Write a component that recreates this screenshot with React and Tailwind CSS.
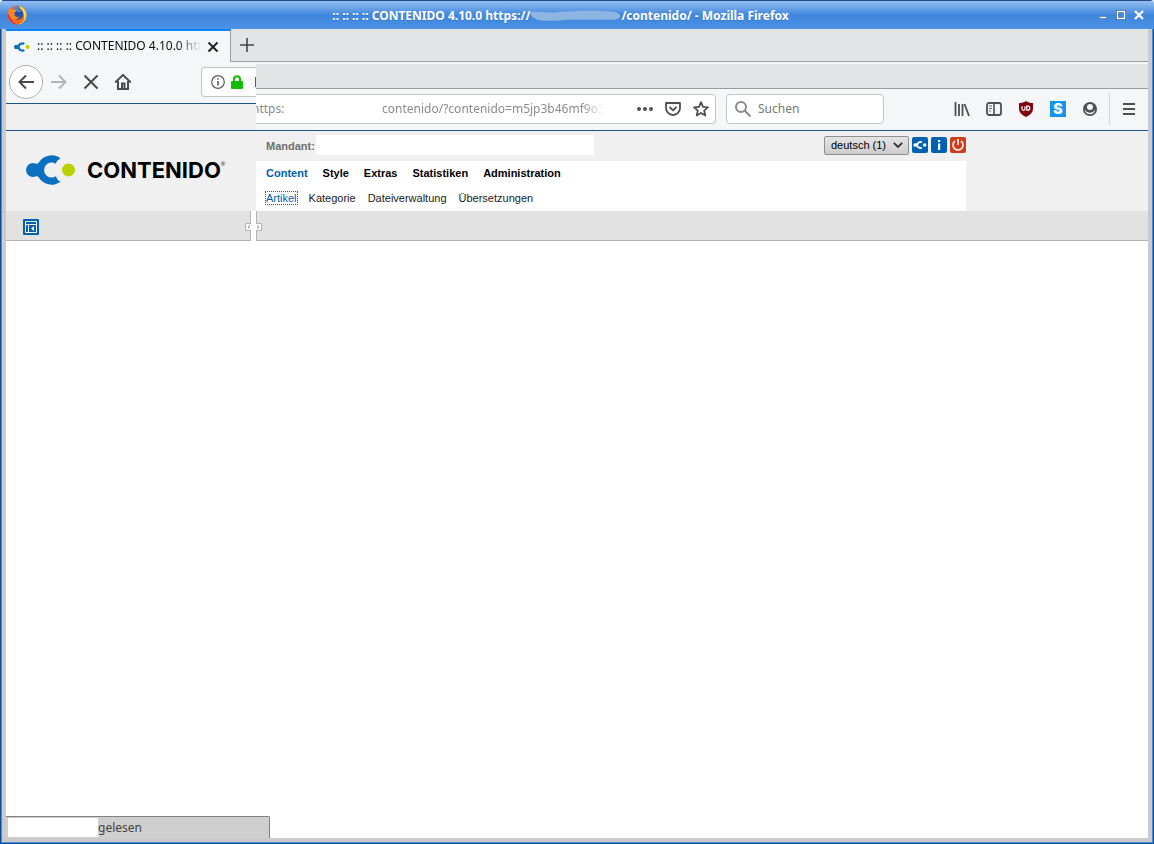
import { useState } from 'react';

const MAIN_NAV = ['Content', 'Style', 'Extras', 'Statistiken', 'Administration'];
const SUB_NAV = ['Artikel', 'Kategorie', 'Dateiverwaltung', 'Übersetzungen'];

const FirefoxLogo = () => (
  <svg viewBox="0 0 20 20" className="size-5 shrink-0">
    <circle cx="10" cy="10" r="9.5" fill="#f7681f" />
    <path d="M12 .8c4 1.500 7.500 4.500 7.500 9.500a9.500 9.500 0 0 1-9 9.200c5-1 7-4.500 6.500-8.500-.4-3.500-3-5-3.500-7z" fill="#ffd93a" />
    <path d="M.8 8C.3 13 4 19.500 10.500 19.500 6 18 3.500 15 3.800 11z" fill="#e8244f" />
    <circle cx="10.500" cy="9" r="5.800" fill="#2b4fa8" />
    <path d="M6 3c2-1.800 5-2.200 7-1.200-1.500.4-2 1.400-2 2.400 2 .2 3.500 1.500 4 3-1.500-.6-3-.6-4 0z" fill="#3f8fe0" />
    <path d="M2 3.500c1 .8 2 1 3.500 1 1.500-.6 3-.2 4 1 0 1.500-2 1.700-2.500 2.500 1 .8 1 2 .2 2.600 1.300 1.400 3.600 1.700 5.600.7-1.300 3-5.300 4-8.300 2.200C1.500 11.500 1 7 2 3.500z" fill="#fb8a1e" />
  </svg>
);

const ContenidoMark = ({ className, fill = '#0b70c0', dot = '#bccf00' }) => (
  <svg viewBox="0 0 50 30" className={className}>
    <circle cx="7" cy="15" r="7" fill={fill} />
    <path d="M34.500 3.200A15 15 0 0 0 12.500 8L9 9.500v11l3.500 1.500A15 15 0 0 0 34.500 26.800Q31 25 29.800 21.200A7.500 7.500 0 1 1 29.800 8.800Q31 5 34.500 3.200z" fill={fill} />
    <circle cx="42.500" cy="15" r="6.500" fill={dot} />
  </svg>
);

const TitleBar = () => (
  <header className="flex h-[29px] items-center border-t border-[#1f4b86] bg-linear-to-b from-[#94bff1] via-[#3f86dc] to-[#4a92e6] pr-[10px] pl-[7px]">
    <FirefoxLogo />
    <h1 className="flex flex-1 items-center justify-center pt-[2px] pr-1 text-xs font-bold text-white text-shadow-2xs">
      <span>:: :: :: :: CONTENIDO 4.10.0 https://</span>
      <svg viewBox="0 0 94 14" className="h-[14px] w-[91px]">
        <path d="M1 3c8-1 16 1 28 0s34-2 48-1c8 0 14 1 16 4 1 4-4 5-12 5H40c-14 1-28 2-34-1C2 8 0 6 1 3z" fill="#8db5e2" />
      </svg>
      <span>/contenido/ - Mozilla Firefox</span>
    </h1>
    <div className="flex items-center gap-2">
      <button type="button" aria-label="Minimieren">
        <svg viewBox="0 0 10 10" className="size-[10px]"><path d="M1.500 6.500h7v2h-7z" fill="#fff" stroke="#2c62a8" strokeWidth=".5" /></svg>
      </button>
      <button type="button" aria-label="Maximieren">
        <svg viewBox="0 0 10 10" className="size-[10px]"><path d="M1.500 1.500h7v7h-7z" fill="none" stroke="#2c62a8" strokeWidth="3" /><path d="M1.500 1.500h7v7h-7z" fill="none" stroke="#fff" strokeWidth="1.500" /></svg>
      </button>
      <button type="button" aria-label="Schließen">
        <svg viewBox="0 0 10 10" className="size-[10px]"><path d="M1 1l8 8M9 1L1 9" stroke="#fff" strokeWidth="2.200" /></svg>
      </button>
    </div>
  </header>
);

const TabStrip = () => (
  <div className="border-b-2 border-[#f5f6f7] bg-[#e3e4e6]">
    <div className="flex h-[33px]">
      <div className="flex w-[225px] items-center border-t-2 border-r border-t-[#0a84ff] border-r-[#9b9ba0] bg-[#f5f6f7] pl-2">
        <ContenidoMark className="h-[10px] w-4" />
        <span className="ml-[7px] w-[164px] overflow-hidden pb-[2px] text-xs whitespace-nowrap text-[#0c0c0d] mask-r-from-85% mask-r-to-100%">
          :: :: :: :: CONTENIDO 4.10.0 http
        </span>
        <button type="button" aria-label="Tab schließen" className="ml-[6px]">
          <svg viewBox="0 0 12 12" className="size-3"><path d="M1.500 1.500l9 9M10.500 1.500l-9 9" stroke="#222" strokeWidth="2" /></svg>
        </button>
      </div>
      <div className="flex flex-1 items-center border-b border-[#9b9ba0] pl-[9px]">
        <button type="button" aria-label="Neuer Tab">
          <svg viewBox="0 0 14 14" className="size-[14px]"><path d="M7 0v14M0 7h14" stroke="#444" strokeWidth="1.600" /></svg>
        </button>
      </div>
    </div>
  </div>
);

// left part of the toolbar: history buttons and start of the address field
const NavButtons = () => (
  <div className="w-[250px] shrink-0 bg-[#f0f0f0]">
    <div className="flex h-[40px] items-center overflow-hidden border-b border-[#1d5294] bg-[#f5f6f7] pb-[3px] pl-[3px]">
      <button type="button" aria-label="Zurück" className="flex size-[34px] items-center justify-center rounded-full border border-[#aeaeb2] bg-white">
        <svg viewBox="0 0 16 16" className="size-4" fill="none" stroke="#4a4a4d" strokeWidth="2"><path d="M16 8H1.500M8 1.500L1.500 8 8 14.500" /></svg>
      </button>
      <button type="button" aria-label="Vor" className="ml-2">
        <svg viewBox="0 0 16 16" className="size-4" fill="none" stroke="#b4b5b7" strokeWidth="2"><path d="M0 8h14.500M8 1.500L14.500 8 8 14.500" /></svg>
      </button>
      <button type="button" aria-label="Laden abbrechen" className="ml-4">
        <svg viewBox="0 0 16 16" className="size-4" fill="none" stroke="#4a4a4d" strokeWidth="2"><path d="M1.500 1.500l13 13M14.500 1.500l-13 13" /></svg>
      </button>
      <button type="button" aria-label="Startseite" className="ml-4">
        <svg viewBox="0 0 16 16" className="size-4" fill="none" stroke="#4a4a4d" strokeWidth="2"><path d="M0 8.500L8 1l8 7.500M3 7v8h10V7" /><path d="M7 14V9.500h2.500V14" /></svg>
      </button>
      <div className="ml-auto flex h-[30px] w-[55px] items-center gap-[6px] rounded-l-sm border border-r-0 border-[#c4c5c8] bg-white pl-[9px]">
        <svg viewBox="0 0 14 14" className="size-[14px] shrink-0">
          <circle cx="7" cy="7" r="6.300" fill="none" stroke="#5a5a5d" strokeWidth="1.200" />
          <path d="M6.200 6h1.600v4.500H6.200zM6.200 3.200h1.600v1.600H6.200z" fill="#5a5a5d" />
        </svg>
        <svg viewBox="0 0 12 14" className="h-[14px] w-3 shrink-0">
          <path d="M3 7V4.200a3 3 0 0 1 6 0V7" fill="none" stroke="#12bc00" strokeWidth="2" />
          <rect y="6" width="12" height="8" rx="1" fill="#12bc00" />
        </svg>
        <span className="ml-[6px] h-[10px] w-px shrink-0 bg-[#5a5a5d]" />
      </div>
    </div>
  </div>
);

const ToolbarIcons = () => (
  <div className="flex items-center gap-4">
    <button type="button" aria-label="Bibliothek">
      <svg viewBox="0 0 16 16" className="size-4" stroke="#4f4f52" strokeWidth="1.800"><path d="M1.500 1v14M5 3v12M8.500 3v12M10.500 3l4.500 12" /></svg>
    </button>
    <button type="button" aria-label="Seitenleiste">
      <svg viewBox="0 0 16 16" className="size-4" fill="none" stroke="#4f4f52"><rect x="1" y="2" width="14" height="12" rx="2" strokeWidth="1.800" /><path d="M8 2v12" strokeWidth="1.600" /><path d="M3 5h3M3 7.500h3M3 10h2" strokeWidth=".9" /></svg>
    </button>
    <button type="button" aria-label="uBlock Origin">
      <svg viewBox="0 0 16 16" className="size-4">
        <path d="M8 0c2 1.500 4.500 2 7 2v5.500c0 4-3 6.500-7 8.500-4-2-7-4.500-7-8.500V2c2.500 0 5-.5 7-2z" fill="#800610" />
        <path d="M4 5.200v2.600a1.500 1.500 0 0 0 3 0V5.200M8.800 5.200v4h1a2 2 0 0 0 0-4z" fill="none" stroke="#fff" strokeWidth="1.200" />
      </svg>
    </button>
    <button type="button" aria-label="Stylus" className="flex size-4 items-center justify-center bg-[#1493f0] font-['Inter',sans-serif] text-[14px] leading-4 font-black text-white">
      S
    </button>
    <button type="button" aria-label="Konto">
      <svg viewBox="0 0 16 16" className="size-4"><circle cx="8" cy="8" r="7" fill="#4f4f52" /><circle cx="8" cy="6" r="3" fill="#f5f6f7" /><path d="M3 8.500c1 2.400 3 3.200 5 3.200s4-.8 5-3.200c0 3-2.200 4.700-5 4.700s-5-1.700-5-4.700z" fill="#f5f6f7" /></svg>
    </button>
  </div>
);

const AddressBar = () => {
  const [url, setUrl] = useState('contenido/?contenido=m5jp3b46mf9o3');
  const [search, setSearch] = useState('');

  return (
    <div className="flex min-w-0 flex-1 flex-col">
      <div className="h-[25px] border-b border-[#9b9ba0] bg-[#e3e4e6]" />
      <div className="flex h-[41px] items-center overflow-hidden bg-[#f5f6f7] pr-3 pb-[2px]">
        <div className="flex h-[30px] w-[460px] shrink-0 items-center overflow-hidden rounded-r-sm border border-l-0 border-[#c4c5c8] bg-white text-xs text-[#8b8b8b]">
          <label htmlFor="url" className="-ml-1 w-[130px]">https:</label>
          <input
            id="url"
            type="text"
            value={url}
            onChange={(e) => setUrl(e.target.value)}
            className="w-[222px] outline-none mask-r-from-90% mask-r-to-100%"
          />
          <div className="ml-auto flex items-center gap-3 pr-[6px]">
            <button type="button" aria-label="Aktionen">
              <svg viewBox="0 0 16 16" className="size-4" fill="#4f4f52"><circle cx="2" cy="8" r="2" /><circle cx="8" cy="8" r="2" /><circle cx="14" cy="8" r="2" /></svg>
            </button>
            <button type="button" aria-label="Pocket">
              <svg viewBox="0 0 16 16" className="size-4" fill="none" stroke="#4f4f52" strokeWidth="1.800"><path d="M1 2h14v5a7 7 0 0 1-14 0zM4.500 6L8 9.300 11.500 6" strokeLinejoin="round" /></svg>
            </button>
            <button type="button" aria-label="Lesezeichen">
              <svg viewBox="0 0 16 16" className="size-4" fill="none" stroke="#4f4f52" strokeWidth="1.800"><path d="M8 1.200l2 4.600 5 .5-3.800 3.300 1.100 4.900L8 12l-4.300 2.500 1.100-4.900L1 6.300l5-.5z" strokeLinejoin="round" /></svg>
            </button>
          </div>
        </div>
        <div className="ml-[10px] flex h-[30px] w-[158px] shrink-0 items-center rounded-sm border border-[#c4c5c8] bg-white pl-2 text-xs">
          <svg viewBox="0 0 16 16" className="size-4 shrink-0" fill="none" stroke="#8a8a8c" strokeWidth="2"><circle cx="6" cy="6" r="5" /><path d="M9.800 9.800l5.700 5.700" /></svg>
          <input
            type="text"
            aria-label="Suchen"
            placeholder="Suchen"
            value={search}
            onChange={(e) => setSearch(e.target.value)}
            className="ml-[7px] w-full min-w-0 outline-none placeholder:text-[#777]"
          />
        </div>
        <div className="ml-auto flex items-center">
          <ToolbarIcons />
          <div className="ml-[11px] h-8 w-px bg-[#d5d6d8]" />
          <button type="button" aria-label="Menü" className="ml-3">
            <svg viewBox="0 0 14 14" className="size-[14px]" stroke="#4f4f52" strokeWidth="2"><path d="M1 2h12M1 7h12M1 12h12" /></svg>
          </button>
        </div>
      </div>
    </div>
  );
};

const LanguageSelect = () => (
  <div className="grid items-center">
    <select
      aria-label="Sprache"
      defaultValue="1"
      className="col-start-1 row-start-1 h-[19px] w-[85px] appearance-none rounded-xs border border-[#8f8f8f] bg-linear-to-b from-[#e4e4e4] to-[#cdcdcd] pl-[6px] text-[11px] leading-4 text-black"
    >
      <option value="1">deutsch (1)</option>
    </select>
    <svg viewBox="0 0 10 6" className="pointer-events-none col-start-1 row-start-1 mr-[6px] h-[6px] w-[10px] justify-self-end"><path d="M.8.8L5 5 9.200.8" fill="none" stroke="#333" strokeWidth="1.800" /></svg>
  </div>
);

const ContenidoHeader = () => (
  <div className="flex h-20 bg-[#f0f0f0]">
    <a href="#" className="flex w-[250px] shrink-0 items-center pb-[3px] pl-5">
      <ContenidoMark className="h-[30px] w-[50px]" />
      <span className="ml-[11px] font-['Inter',sans-serif] text-[22px] leading-6 font-bold text-black">CONTENIDO</span>
      <span className="mb-3 text-[6px] leading-[6px] text-black">®</span>
    </a>
    <div className="w-[710px]">
      <div className="flex h-[30px] items-center pl-[10px]">
        <label htmlFor="mandant" className="w-[50px] font-bold text-[#6f6f6f]">Mandant:</label>
        <input id="mandant" type="text" readOnly className="mb-[2px] h-5 w-[278px] bg-white outline-none" />
        <div className="mb-[2px] ml-auto flex items-center gap-[3px]">
          <LanguageSelect />
          <button type="button" aria-label="Contenido" className="flex size-4 items-center justify-center rounded-xs bg-[#0060b1]">
            <ContenidoMark className="h-2 w-[14px]" fill="#fff" dot="#fff" />
          </button>
          <button type="button" aria-label="Info" className="flex size-4 items-center justify-center rounded-xs bg-[#0060b1]">
            <svg viewBox="0 0 16 16" className="size-4"><path d="M7 3h2.200v2H7zM7 6.500h2.200V13H7z" fill="#fff" /></svg>
          </button>
          <button type="button" aria-label="Abmelden" className="flex size-4 items-center justify-center rounded-xs bg-[#cf3a1c]">
            <svg viewBox="0 0 16 16" className="size-4" fill="none" stroke="#ffe3d8" strokeWidth="1.800"><path d="M8 2v6M5 4a5 5 0 1 0 6 0" /></svg>
          </button>
        </div>
      </div>
      <nav className="h-[50px] bg-white pl-[10px]">
        <ul className="flex h-6 items-center gap-[15px] font-bold">
          {MAIN_NAV.map((item) => (
            <li key={item}>
              <a href="#" className={item === 'Content' ? 'text-[#0060b1]' : 'text-black'}>{item}</a>
            </li>
          ))}
        </ul>
        <ul className="flex h-[26px] items-center gap-3">
          {SUB_NAV.map((item) => (
            <li key={item}>
              <a href="#" className={item === 'Artikel' ? 'text-[#0060b1] outline-1 outline-dotted outline-[#0060b1]' : 'text-[#1a1a1a]'}>{item}</a>
            </li>
          ))}
        </ul>
      </nav>
    </div>
  </div>
);

const FrameBar = () => (
  <div className="flex h-[30px] bg-white">
    <div className="flex w-[245px] items-center border-r border-b border-[#b3b3b3] bg-[#e2e2e2] pt-[2px] pl-[17px]">
      <button type="button" aria-label="Navigation umschalten">
        <svg viewBox="0 0 16 16" className="size-4">
          <rect width="16" height="16" rx="1" fill="#0060b1" />
          <path d="M2.500 2.500h11v11h-11zM2.500 5.500h11M5.500 5.500v8" fill="none" stroke="#fff" />
          <path d="M11 7v5L8 9.500z" fill="#fff" />
        </svg>
      </button>
    </div>
    {/* splitter between the two frames */}
    <div className="relative w-[5px]">
      <svg viewBox="0 0 17 8" className="absolute top-3 -left-[6px] h-2 w-[17px]">
        <path d="M.5.500h16v7H.5z" fill="#fff" stroke="#b3b3b3" />
        <path d="M6 0h5v8H6z" fill="#fff" />
        <path d="M5 2.500L3 4l2 1.500M12 2.500L14 4l-2 1.500" fill="none" stroke="#999" />
      </svg>
    </div>
    <div className="flex-1 border-b border-l border-[#b3b3b3] bg-[#e2e2e2]" />
  </div>
);

const App = () => {
  return (
    <div className="flex min-h-screen flex-col overflow-hidden rounded-t-sm bg-white font-['Noto_Sans',sans-serif]">
      <TitleBar />
      <div className="flex flex-1 border-x border-b border-[#0e4d99] bg-[#4f8ad2] px-px pb-px">
        <div className="flex min-w-0 flex-1 flex-col border-x-4 border-b-4 border-[#cbcbcb] bg-white">
          <TabStrip />
          <div className="flex border-b border-[#1d5294]">
            <NavButtons />
            <AddressBar />
          </div>
          <main className="flex-1 font-['Liberation_Sans',sans-serif] text-[11px] leading-[14px]">
            <ContenidoHeader />
            <FrameBar />
          </main>
          <footer className="flex h-[22px] w-[264px] items-center rounded-tr-xs border-t border-r border-[#808080] bg-[#cfcfcf] pl-[2px] text-xs text-[#444]">
            <div className="h-[19px] w-[90px] bg-white" />
            <span>gelesen</span>
          </footer>
        </div>
      </div>
    </div>
  );
};

export default App;
